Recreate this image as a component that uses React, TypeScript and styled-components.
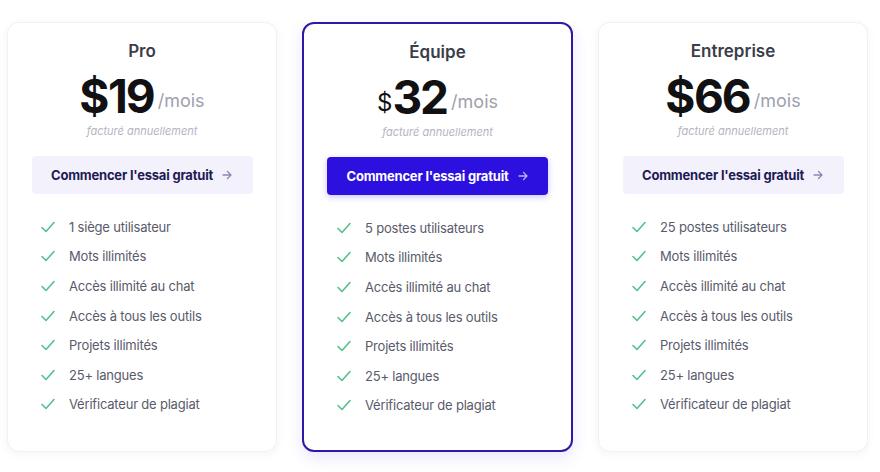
import styled, { createGlobalStyle } from "styled-components";

const Global = createGlobalStyle`
  html, body { margin: 0; padding: 0; background: #ffffff; }
  body { font-family: Inter, "Noto Sans", sans-serif; }
`;

const Page = styled.div`
  display: flex;
  gap: 25px;
  padding: 22px 0 0 7px;
  width: 880px;
  height: 472px;
  box-sizing: border-box;
`;

const Card = styled.div<{ $featured?: boolean }>`
  width: ${(p) => (p.$featured ? "271px" : "270px")};
  height: 430px;
  box-sizing: border-box;
  border-radius: 12px;
  background: #fff;
  display: flex;
  flex-direction: column;
  align-items: center;
  padding: 18px 24px 0;
  border: ${(p) => (p.$featured ? "2px solid #2c1aa6" : "1px solid #f1f1f5")};
  box-shadow: ${(p) =>
    p.$featured
      ? "0 6px 16px rgba(80, 60, 230, 0.12)"
      : "0 2px 10px rgba(30, 30, 80, 0.05)"};
`;

const Title = styled.div`
  font-size: 17px;
  line-height: 20px;
  font-weight: 600;
  color: #3b3d4a;
`;

const PriceRow = styled.div`
  display: flex;
  align-items: baseline;
  margin-top: 10px;
  height: 50px;
`;

const Currency = styled.span<{ $small?: boolean }>`
  font-size: ${(p) => (p.$small ? "24px" : "46px")};
  font-weight: ${(p) => (p.$small ? 400 : 700)};
  color: #111114;
  letter-spacing: ${(p) => (p.$small ? "0" : "-1.5px")};
  line-height: 50px;
  position: relative;
  top: ${(p) => (p.$small ? "-3px" : "0")};
`;

const Amount = styled.span`
  font-size: 46px;
  font-weight: 700;
  color: #111114;
  letter-spacing: -2px;
  line-height: 50px;
`;

const Per = styled.span`
  font-size: 18px;
  color: #9ea1ad;
  margin-left: 4px;
  position: relative;
  top: -6px;
`;

const Billing = styled.div`
  font-size: 11px;
  font-style: italic;
  color: #b3b5be;
  line-height: 14px;
  margin-top: 3px;
`;

const Button = styled.button<{ $primary?: boolean }>`
  margin-top: 18px;
  width: 221px;
  height: 38px;
  border: none;
  border-radius: 4px;
  display: flex;
  align-items: center;
  justify-content: center;
  gap: 8px;
  font-family: inherit;
  font-size: 13px;
  font-weight: 700;
  letter-spacing: -0.2px;
  cursor: pointer;
  background: ${(p) => (p.$primary ? "#2b10e0" : "#f3f2fc")};
  color: ${(p) => (p.$primary ? "#ffffff" : "#1e1a55")};
  box-shadow: ${(p) => (p.$primary ? "0 2px 6px rgba(43, 16, 224, 0.25)" : "none")};
`;

const Features = styled.ul`
  list-style: none;
  margin: 18px 0 0;
  padding: 0 0 0 8px;
  align-self: stretch;
  display: flex;
  flex-direction: column;
`;

const Feature = styled.li`
  display: flex;
  align-items: center;
  gap: 13px;
  height: 29.6px;
  font-size: 13px;
  color: #595b6b;
  letter-spacing: -0.2px;
`;

const Check = () => (
  <svg width="16" height="14" viewBox="0 0 16 14" fill="none">
    <polyline points="2,7.5 6,11.5 14,2.5" stroke="#55c08a" strokeWidth="1.6" strokeLinecap="round" strokeLinejoin="round" />
  </svg>
);

const Arrow = ({ color }: { color: string }) => (
  <svg width="12" height="12" viewBox="0 0 12 12" fill="none">
    <path d="M2 6h8M6.5 2.5L10 6l-3.5 3.5" stroke={color} strokeWidth="1.3" strokeLinecap="round" strokeLinejoin="round" />
  </svg>
);

type Plan = {
  name: string;
  amount: string;
  featured?: boolean;
  features: string[];
};

const common = [
  "Mots illimités",
  "Accès illimité au chat",
  "Accès à tous les outils",
  "Projets illimités",
  "25+ langues",
  "Vérificateur de plagiat",
];

const plans: Plan[] = [
  { name: "Pro", amount: "19", features: ["1 siège utilisateur", ...common] },
  { name: "Équipe", amount: "32", featured: true, features: ["5 postes utilisateurs", ...common] },
  { name: "Entreprise", amount: "66", features: ["25 postes utilisateurs", ...common] },
];

export default function App() {
  return (
    <>
      <Global />
      <Page>
        {plans.map((plan) => (
          <Card key={plan.name} $featured={plan.featured}>
            <Title>{plan.name}</Title>
            <PriceRow>
              <Currency $small={plan.featured}>$</Currency>
              <Amount>{plan.amount}</Amount>
              <Per>/mois</Per>
            </PriceRow>
            <Billing>facturé annuellement</Billing>
            <Button $primary={plan.featured}>
              Commencer l'essai gratuit
              <Arrow color={plan.featured ? "#b9b2f5" : "#8c88b0"} />
            </Button>
            <Features>
              {plan.features.map((f) => (
                <Feature key={f}>
                  <Check />
                  {f}
                </Feature>
              ))}
            </Features>
          </Card>
        ))}
      </Page>
    </>
  );
}
